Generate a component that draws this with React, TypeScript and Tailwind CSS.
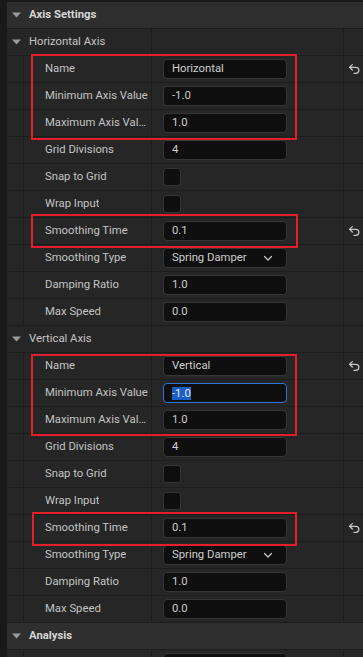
import React from "react";

const font = { fontFamily: "Roboto, 'Noto Sans', 'Liberation Sans', sans-serif" };

function Tri() {
  return (
    <svg width="9" height="6" viewBox="0 0 9 6" className="shrink-0">
      <path d="M0 0.5 H9 L4.5 5.5 Z" fill="#9b9b9b" />
    </svg>
  );
}

function ResetIcon() {
  return (
    <svg width="13" height="13" viewBox="0 0 24 24" fill="none" stroke="#c4c4c4" strokeWidth="2.4" strokeLinecap="round" strokeLinejoin="round">
      <path d="M8 13 3 8l5-5" />
      <path d="M3 8h11.5a5.5 5.5 0 0 1 0 11H11" />
    </svg>
  );
}

function Chevron() {
  return (
    <svg width="12" height="12" viewBox="0 0 24 24" fill="none" stroke="#c4c4c4" strokeWidth="2.6" strokeLinecap="round" strokeLinejoin="round">
      <path d="m5 9 7 7 7-7" />
    </svg>
  );
}

function Header({ label }: { label: string }) {
  return (
    <div className="flex h-[27px] items-center border-b border-[#1d1d1d] bg-[#2e2e2e] pl-[5px]">
      <Tri />
      <span className="ml-[8px] text-[11.3px] font-bold text-[#d6d6d6]">{label}</span>
    </div>
  );
}

function CatRow({ label }: { label: string }) {
  return (
    <div className="flex h-[27px] border-b border-[#1d1d1d] bg-[#262626]">
      <div className="flex w-[145px] items-center border-r border-[#1d1d1d] pl-[5px]">
        <Tri />
        <span className="ml-[8px] text-[11.3px] text-[#c4c4c4]">{label}</span>
      </div>
      <div className="w-[192px] border-r border-[#1d1d1d]" />
      <div className="flex-1" />
    </div>
  );
}

function Input({ value, focused }: { value: string; focused?: boolean }) {
  return (
    <div
      className={
        "flex h-[20px] w-[124px] items-center rounded-[4px] border bg-[#0f0f0f] pl-[8px] text-[11.3px] text-[#cdcdcd] " +
        (focused ? "border-[#2f74d8]" : "border-[#363636]")
      }
    >
      {focused ? <span className="bg-[#1a5ec8] leading-[13px] text-[#e8e8e8]">{value}</span> : value}
    </div>
  );
}

function Check() {
  return <div className="h-[18px] w-[18px] rounded-[3px] border border-[#363636] bg-[#0f0f0f]" />;
}

function Dropdown({ value }: { value: string }) {
  return (
    <div className="flex h-[20px] w-[124px] items-center justify-between rounded-[4px] border border-[#363636] bg-[#0f0f0f] pl-[8px] pr-[12px] text-[11.3px] text-[#cdcdcd]">
      <span>{value}</span>
      <Chevron />
    </div>
  );
}

function PropRow({ label, children, reset }: { label: string; children?: React.ReactNode; reset?: boolean }) {
  return (
    <div className="flex h-[27px] border-b border-[#1d1d1d] bg-[#262626]">
      <div className="w-[17px] border-r border-[#1d1d1d]" />
      <div className="flex w-[128px] min-w-0 items-center border-r border-[#1d1d1d] pl-[21px] pr-[1px]">
        <span className="truncate text-[11.3px] text-[#c4c4c4]">{label}</span>
      </div>
      <div className="flex w-[192px] items-center border-r border-[#1d1d1d] pl-[11px]">{children}</div>
      <div className="flex flex-1 items-center justify-center pl-[1px]">{reset ? <ResetIcon /> : null}</div>
    </div>
  );
}

function AxisGroup({ name, focusedMin }: { name: string; focusedMin?: boolean }) {
  return (
    <>
      <PropRow label="Name" reset>
        <Input value={name} />
      </PropRow>
      <PropRow label="Minimum Axis Value">
        <Input value="-1.0" focused={focusedMin} />
      </PropRow>
      <PropRow label="Maximum Axis Value">
        <Input value="1.0" />
      </PropRow>
      <PropRow label="Grid Divisions">
        <Input value="4" />
      </PropRow>
      <PropRow label="Snap to Grid">
        <Check />
      </PropRow>
      <PropRow label="Wrap Input">
        <Check />
      </PropRow>
      <PropRow label="Smoothing Time" reset>
        <Input value="0.1" />
      </PropRow>
      <PropRow label="Smoothing Type">
        <Dropdown value="Spring Damper" />
      </PropRow>
      <PropRow label="Damping Ratio">
        <Input value="1.0" />
      </PropRow>
      <PropRow label="Max Speed">
        <Input value="0.0" />
      </PropRow>
    </>
  );
}

function RedBox({ l, t, w, h }: { l: number; t: number; w: number; h: number }) {
  return (
    <div
      className="pointer-events-none absolute border-2 border-[#e21f2b]"
      style={{ left: l, top: t, width: w, height: h }}
    />
  );
}

export default function App() {
  return (
    <div className="relative h-[657px] w-[363px] overflow-hidden bg-[#1a1a1a]" style={font}>
      <div className="flex flex-col pl-[7px] pt-[2px]">
        <Header label="Axis Settings" />
        <CatRow label="Horizontal Axis" />
        <AxisGroup name="Horizontal" />
        <CatRow label="Vertical Axis" />
        <AxisGroup name="Vertical" focusedMin />
        <Header label="Analysis" />
        <PropRow label="">
          <Input value="" />
        </PropRow>
      </div>
      <RedBox l={31} t={54} w={266} h={86} />
      <RedBox l={31} t={214} w={267} h={34} />
      <RedBox l={31} t={354} w={266} h={82} />
      <RedBox l={32} t={512} w={265} h={34} />
    </div>
  );
}
